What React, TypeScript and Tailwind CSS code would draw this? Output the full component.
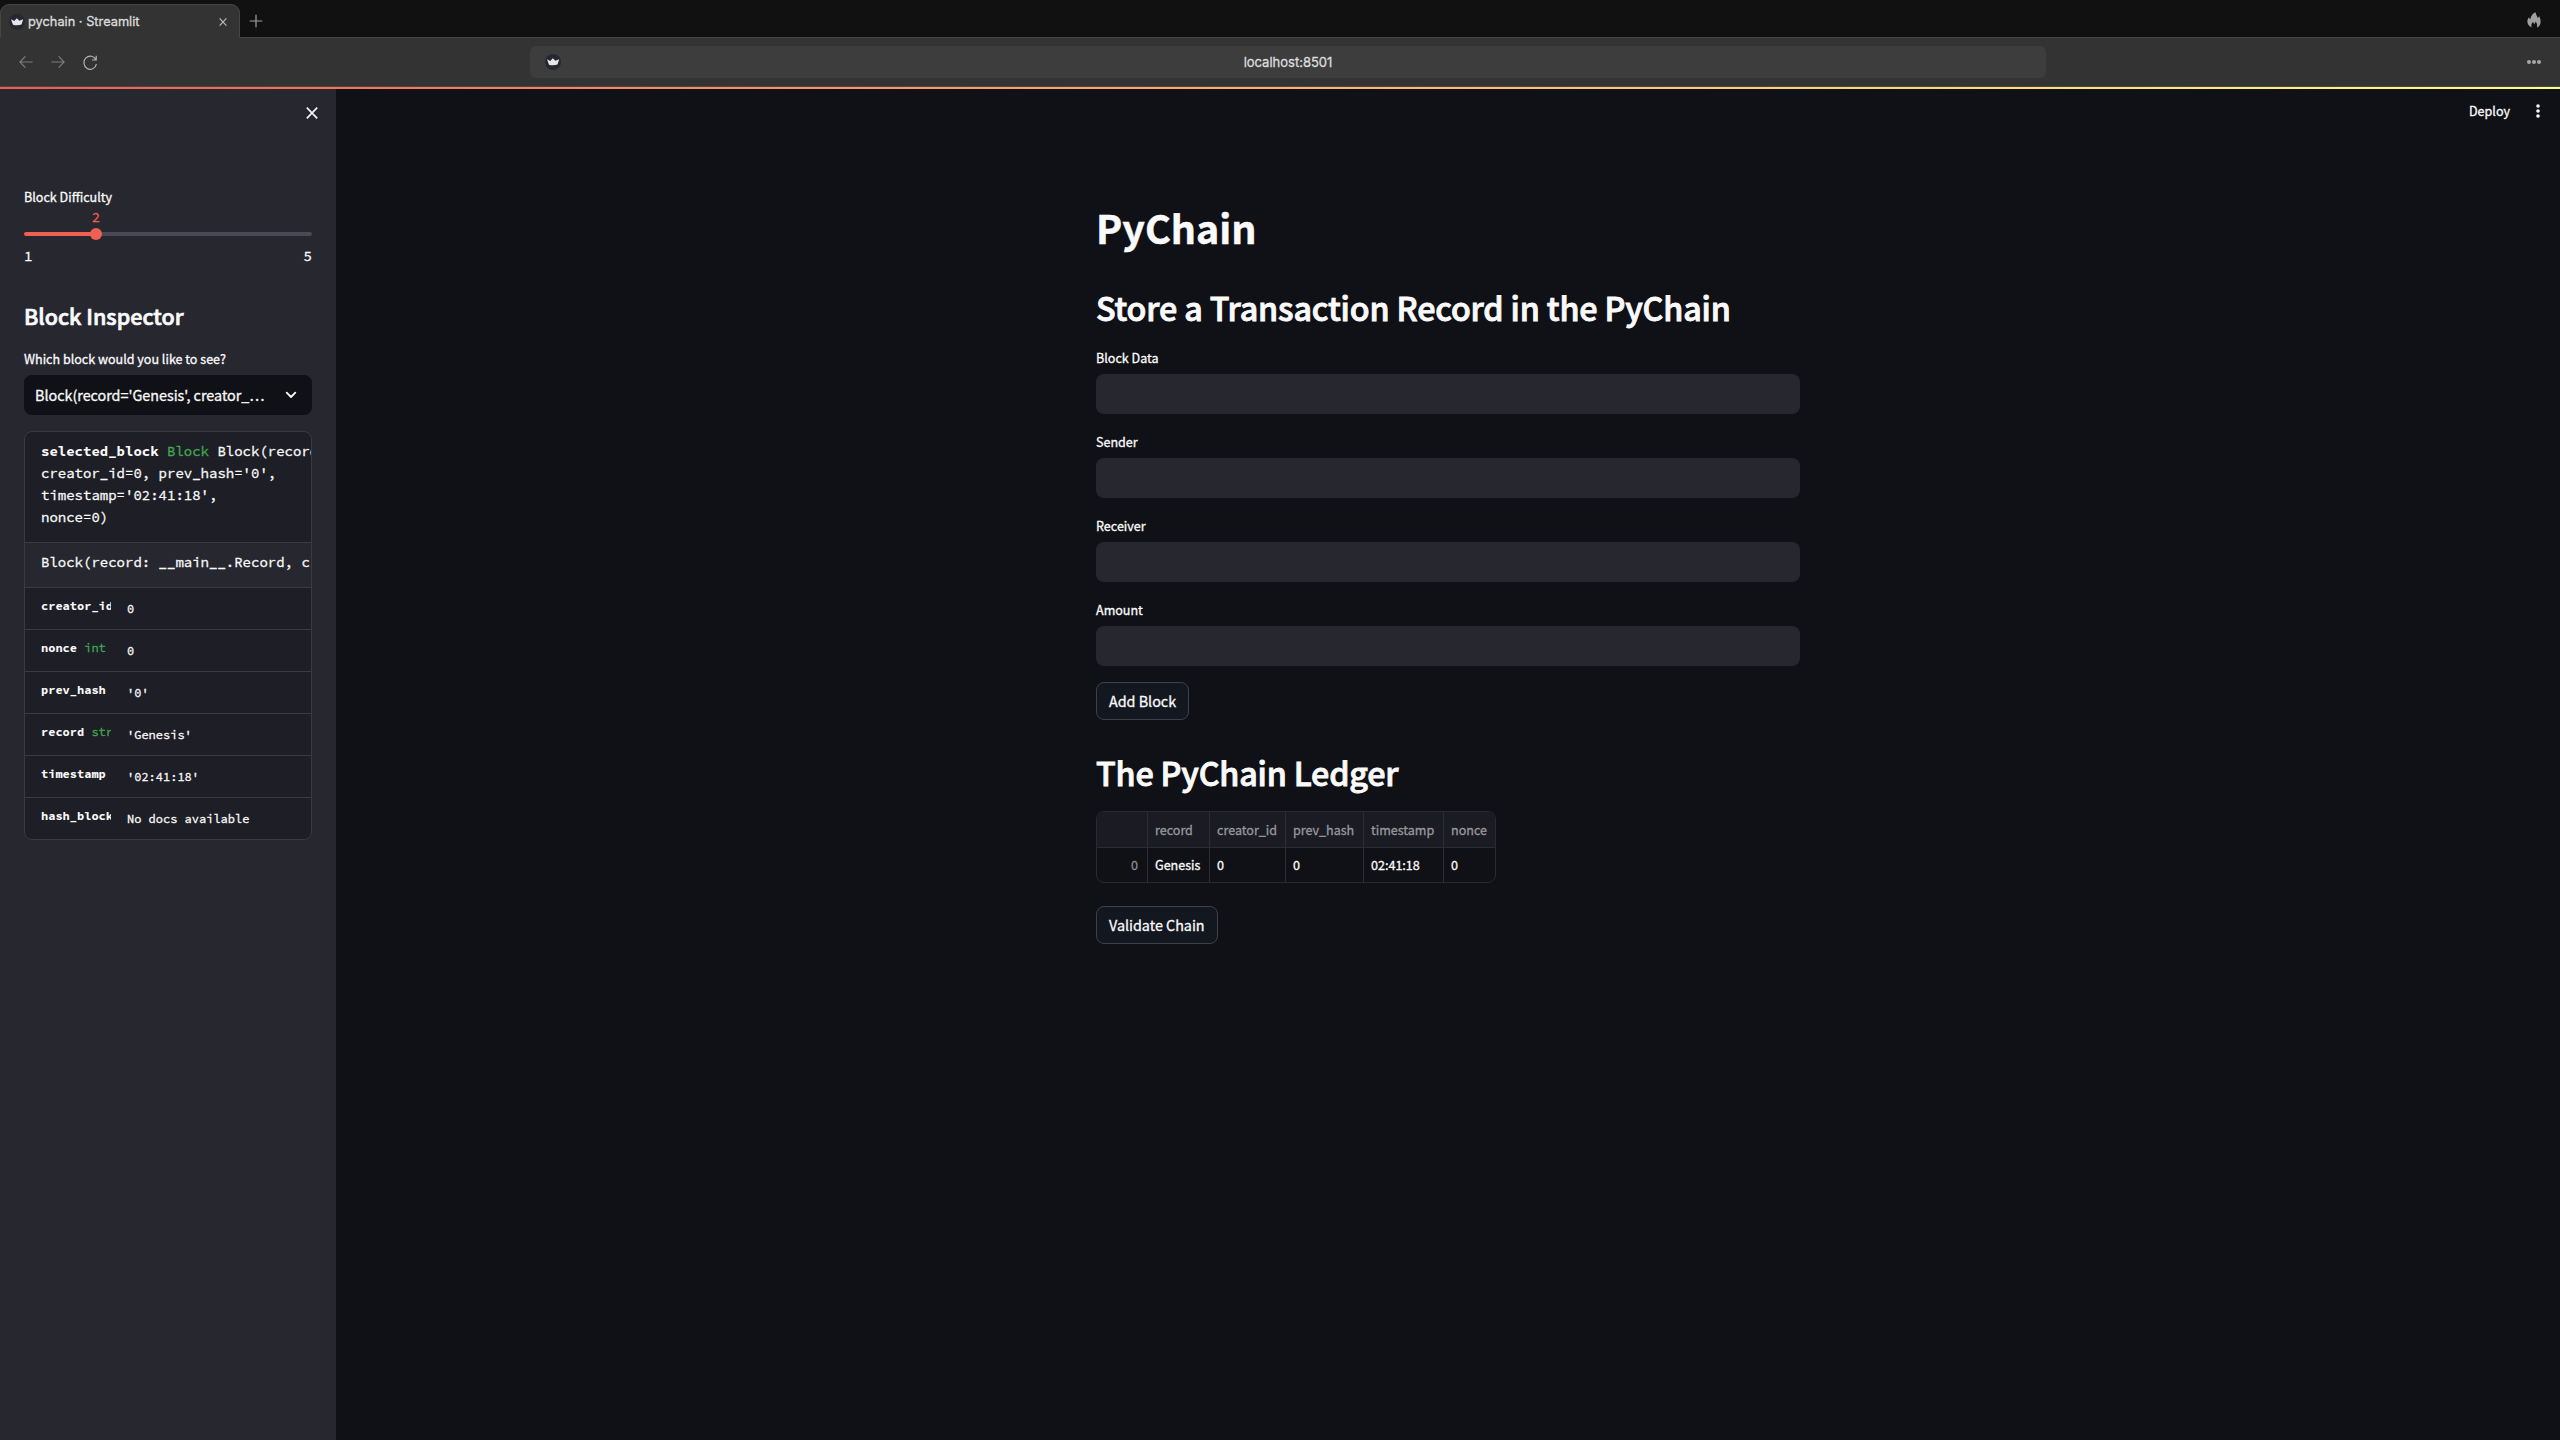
import type { ReactNode } from 'react';

function Crown() {
  return (
    <svg viewBox="0 0 16 16" className="size-4">
      <circle cx="8" cy="8" r="8" fill="#272733" />
      <path d="M2 5.2 5.3 7 7.8 4.3 10.4 6.8 14.2 5.2 12.5 10.6Q8.2 12 4 10.8Z" fill="#e6e6e6" />
    </svg>
  );
}

function BrowserChrome() {
  return (
    <header className="font-[Inter,sans-serif] text-[#dcdcdc]">
      <div className="flex h-[37px] items-end bg-[#111111]">
        <div className="relative z-10 -mb-px flex h-[34px] w-[240px] items-center rounded-t-[9px] border border-b-0 border-[#454545] bg-[#333333] pl-[8px] pr-[11px]">
          <Crown />
          <span className="ml-[3px] flex-1 text-[12.8px] leading-4">pychain · Streamlit</span>
          <svg viewBox="0 0 10 10" className="size-2.5 text-[#b5b5b5]" fill="none" stroke="currentColor" strokeWidth="1.3">
            <path d="M1.6 1.4 8.4 8.6M8.4 1.4 1.6 8.6" />
          </svg>
        </div>
        <svg viewBox="0 0 14 14" className="mb-[9px] ml-[9px] size-[14px]" fill="none" stroke="#a3a3a3" strokeWidth="1.2">
          <path d="M7 .8V13.2M.8 7H13.2" />
        </svg>
        <svg viewBox="0 0 14 16" className="mb-[9px] ml-auto mr-[19px] h-4 w-[14px]" fill="#a0a0a0">
          <path d="M8.6.3C9 3.2 10.2 4.3 10.9 6.2 11.3 5.5 11.6 4.9 12.2 4.3 13.1 6 13.7 7.9 13.6 10 13.5 12.4 12.3 14.6 10 15.6 10.5 13 9.9 11 8.6 9.6 8.3 11 7.8 11.4 7.2 12.2 6.5 11.3 6.3 10.6 6.2 9.7 4.4 11.4 4 13.4 4.6 15.6 1.8 14.3.4 12 .4 9.6.4 7.7 1 6.4 1.9 5.2 2.3 6.1 2.6 6.7 3.2 7.4 3.9 4.3 5.6 1.3 8.6.3Z" />
        </svg>
      </div>
      <div className="flex h-[50px] items-center border-y border-[#464646] bg-[#333333]">
        <svg viewBox="0 0 14 14" className="ml-[19px] size-[14px]" fill="none" stroke="#7c7c7c" strokeWidth="1.2">
          <path d="M6.4 1.4.9 7 6.4 12.6M.9 7H13.6" />
        </svg>
        <svg viewBox="0 0 14 14" className="ml-[18px] size-[14px]" fill="none" stroke="#7c7c7c" strokeWidth="1.2">
          <path d="M7.6 1.4 13.1 7 7.6 12.6M13.1 7H.4" />
        </svg>
        <svg viewBox="0 0 14 15" className="ml-[18px] h-[15px] w-[14px]" fill="none" stroke="#b4b4b4" strokeWidth="1.2">
          <path d="M13.2.8V5H9M12.9 4.8A6.3 6.6 0 1 0 13.4 9.2" />
        </svg>
        <div className="ml-[433px] grid h-8 w-[1516px] grid-cols-[1fr_auto_1fr] items-center rounded-[6px] bg-[#3d3d3d] px-[15px]">
          <Crown />
          <span className="text-[13px] leading-4">localhost:8501</span>
          <span />
        </div>
        <div className="ml-auto mr-[19px] flex gap-px">
          <i className="size-1 rounded-full bg-[#a8a8a8]" />
          <i className="size-1 rounded-full bg-[#a8a8a8]" />
          <i className="size-1 rounded-full bg-[#a8a8a8]" />
        </div>
      </div>
      <div className="h-[2px] bg-linear-to-r from-[#ef5b53] to-[#fdfd86]" />
    </header>
  );
}

const ATTRS: { name: string; type?: string; value: string }[] = [
  { name: 'creator_id', value: '0' },
  { name: 'nonce', type: 'int', value: '0' },
  { name: 'prev_hash', value: "'0'" },
  { name: 'record', type: 'str', value: "'Genesis'" },
  { name: 'timestamp', value: "'02:41:18'" },
  { name: 'hash_block', value: 'No docs available' },
];

function HelpBox() {
  return (
    <div className="mt-4 overflow-hidden rounded-lg border border-[#393a43] bg-[#1e1e26] font-['Source_Code_Pro','DejaVu_Sans_Mono',monospace] text-sm">
      <div className="h-[111px] border-b border-[#393a43] pl-4 pt-2 leading-[22px] whitespace-nowrap">
        <div><b className="[-webkit-text-stroke:0px]">selected_block</b> <span className="text-[#42a852]">Block</span> Block(record='Genesis',</div>
        <div>creator_id=0, prev_hash='0',</div>
        <div>timestamp='02:41:18',</div>
        <div>nonce=0)</div>
      </div>
      <div className="h-11 overflow-hidden bg-[#272730] pl-4 pt-2 leading-[22px] whitespace-nowrap">
        Block(record: __main__.Record, creator_id: int)
      </div>
      {ATTRS.map((a) => (
        <div key={a.name} className="flex h-[42px] border-t border-[#393a43] text-xs leading-[22px] whitespace-nowrap">
          <div className="ml-4 w-[70px] overflow-hidden pt-[7px]">
            <b className="[-webkit-text-stroke:0px]">{a.name}</b> {a.type && <span className="text-[#42a852]">{a.type}</span>}
          </div>
          <div className="ml-4 pt-[10px]">{a.value}</div>
        </div>
      ))}
    </div>
  );
}

function Sidebar() {
  return (
    <aside className="w-[336px] shrink-0 bg-[#272730] px-6">
      <div className="-mr-2 flex h-12 items-center justify-end">
        <svg viewBox="0 0 16 16" className="size-4" fill="none" stroke="#fafafa" strokeWidth="1.6">
          <path d="M2.8 2.6 13.2 13.4M13.2 2.6 2.8 13.4" />
        </svg>
      </div>
      <div className="mt-[50px] text-[12.55px] leading-5">Block Difficulty</div>
      <div className="mt-[2px] flex flex-col font-['Source_Code_Pro','DejaVu_Sans_Mono',monospace] text-sm leading-4">
        <span className="w-36 text-center text-[#ef5f52]">2</span>
        <div className="mt-[3px] flex h-3 items-center">
          <div className="h-1 w-[72px] rounded-l-full bg-[#ef5f52]" />
          <div className="z-10 -mx-1.5 size-3 rounded-full bg-[#ef5f52]" />
          <div className="h-1 flex-1 rounded-r-full bg-[#494a55]" />
        </div>
        <div className="mt-2 flex justify-between"><span>1</span><span>5</span></div>
      </div>
      <h2 className="mt-[38px] text-[21.5px] leading-7 font-medium [-webkit-text-stroke:0.7px_#fafafa]">Block Inspector</h2>
      <div className="mt-[19px] text-[12.55px] leading-5">Which block would you like to see?</div>
      <div className="mt-1.5 flex h-10 items-center justify-between rounded-lg bg-[#101116] pl-[11px] pr-[15px] text-[14.34px]">
        <span className="leading-6">Block(record='Genesis', creator_…</span>
        <svg viewBox="0 0 12 8" className="h-2 w-3" fill="none" stroke="#fafafa" strokeWidth="1.8" strokeLinecap="round" strokeLinejoin="round">
          <path d="M1.7 1.7 6 6 10.3 1.7" />
        </svg>
      </div>
      <HelpBox />
    </aside>
  );
}

function Field({ label }: { label: string }) {
  return (
    <label className="block h-[84px]">
      <span className="block h-6 text-[12.55px] leading-5">{label}</span>
      <span className="mt-[2px] block h-10 rounded-lg bg-[#272730]" />
    </label>
  );
}

function Button({ children }: { children: ReactNode }) {
  return (
    <button className="block h-[38px] rounded-lg border border-[#404148] bg-[#131720] px-3 text-[14.34px] leading-6 [-webkit-text-stroke:0.3px]">{children}</button>
  );
}

const COLS = [
  { name: 'record', value: 'Genesis', w: 'w-[62px]' },
  { name: 'creator_id', value: '0', w: 'w-[76px]' },
  { name: 'prev_hash', value: '0', w: 'w-[78px]' },
  { name: 'timestamp', value: '02:41:18', w: 'w-[80px]' },
  { name: 'nonce', value: '0', w: 'w-[52px]' },
];

function Ledger() {
  return (
    <div className="flex h-[72px] w-[400px] overflow-hidden rounded-lg border border-[#2a2b30] text-[12.55px] leading-5">
      <div className="w-[50px]">
        <div className="h-9 border-b border-[#2d2e35] bg-[#1a1b23]" />
        <div className="pr-[9px] pt-[7px] text-right text-[#8b8c91]">0</div>
      </div>
      {COLS.map((c) => (
        <div key={c.name} className={`border-l border-[#2d2e35] ${c.w}`}>
          <div className="h-9 border-b border-[#2d2e35] bg-[#1a1b23] pl-[7px] pt-2 text-[#97989d]">{c.name}</div>
          <div className="pl-[7px] pt-[7px]">{c.value}</div>
        </div>
      ))}
    </div>
  );
}

function Main() {
  return (
    <main className="flex flex-1 flex-col items-center">
      <div className="flex h-11 w-full items-center justify-end gap-[25px] pr-[19px]">
        <span className="text-[12.55px] leading-5">Deploy</span>
        <svg viewBox="0 0 6 16" className="h-4 w-1.5" fill="#fafafa">
          <circle cx="3" cy="3" r="1.8" /><circle cx="3" cy="8" r="1.8" /><circle cx="3" cy="13" r="1.8" />
        </svg>
      </div>
      <div className="w-[704px]">
        <h1 className="mt-[67px] text-[39.4px] leading-[54px] font-bold [-webkit-text-stroke:0.5px_#fafafa]">PyChain</h1>
        <h2 className="mt-[31px] text-[32.27px] leading-[44px] font-medium tracking-[-0.16px] [-webkit-text-stroke:0.9px_#fafafa]">Store a Transaction Record in the PyChain</h2>
        <div className="mt-[19px]">
          <Field label="Block Data" />
          <Field label="Sender" />
          <Field label="Receiver" />
          <Field label="Amount" />
        </div>
        <div className="-mt-[2px]"><Button>Add Block</Button></div>
        <h2 className="mt-[30px] text-[32.27px] leading-[44px] font-medium tracking-[-0.18px] [-webkit-text-stroke:0.9px_#fafafa]">The PyChain Ledger</h2>
        <div className="mt-[17px]"><Ledger /></div>
        <div className="mt-[23px]"><Button>Validate Chain</Button></div>
      </div>
    </main>
  );
}

export default function App() {
  return (
    <div className="flex h-[1440px] w-[2560px] flex-col overflow-hidden bg-[#101116] font-['Noto_Sans_CJK_JP','Open_Sans',sans-serif] text-[#fafafa] [-webkit-text-stroke:0.3px]">
      <BrowserChrome />
      <div className="flex flex-1">
        <Sidebar />
        <Main />
      </div>
    </div>
  );
}
